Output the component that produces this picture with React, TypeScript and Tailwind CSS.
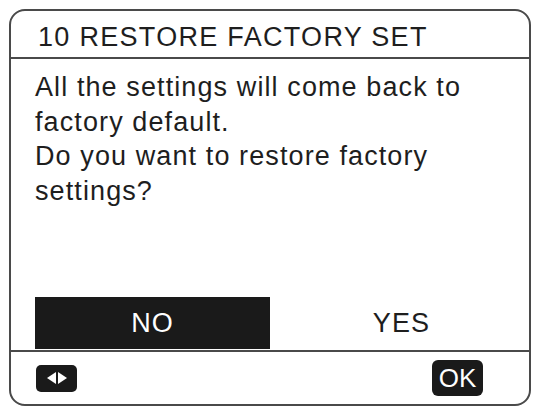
export default function App() {
  return (
    <div className="h-[409px] w-[537px] bg-white pl-[9px] pt-[9px] font-['Liberation_Sans',Arial,sans-serif] text-[#1e1e1e]">
      <div className="flex h-[397px] w-[522px] flex-col rounded-[16px] border-2 border-[#4a4a4a]">
        <div className="flex h-[48px] items-end border-b-2 border-[#4a4a4a] pb-[6px] pl-[27px] text-[27px] leading-none tracking-[1.3px]">
          10 RESTORE FACTORY SET
        </div>
        <div className="flex-1 pl-[24px] pt-[11px] text-[27px] leading-[34.5px] tracking-[1.1px]">
          <p>All the settings will come back to</p>
          <p>factory default.</p>
          <p>Do you want to restore factory</p>
          <p>settings?</p>
        </div>
        <div className="flex h-[55px] items-start border-b-2 border-[#4a4a4a] pl-[24px]">
          <div className="flex h-[52px] w-[235px] items-center justify-center bg-[#1a1a1a] text-[27px] tracking-[1.1px] text-white">
            NO
          </div>
          <div className="flex h-[52px] flex-1 items-center justify-center pl-[4px] text-[27px] tracking-[1.1px]">
            YES
          </div>
        </div>
        <div className="flex h-[52px] items-center justify-between pl-[25px] pr-[46px]">
          <div className="flex h-[27px] w-[41px] items-center justify-center gap-[2px] rounded-[5px] bg-[#1a1a1a]">
            <svg width="9" height="12" viewBox="0 0 9 12">
              <path d="M9 0 L0 6 L9 12 Z" fill="#fff" />
            </svg>
            <svg width="9" height="12" viewBox="0 0 9 12">
              <path d="M0 0 L9 6 L0 12 Z" fill="#fff" />
            </svg>
          </div>
          <div className="flex h-[36px] w-[51px] items-center justify-center rounded-[6px] bg-[#1a1a1a] text-[26px] leading-none text-white">
            OK
          </div>
        </div>
      </div>
    </div>
  )
}
